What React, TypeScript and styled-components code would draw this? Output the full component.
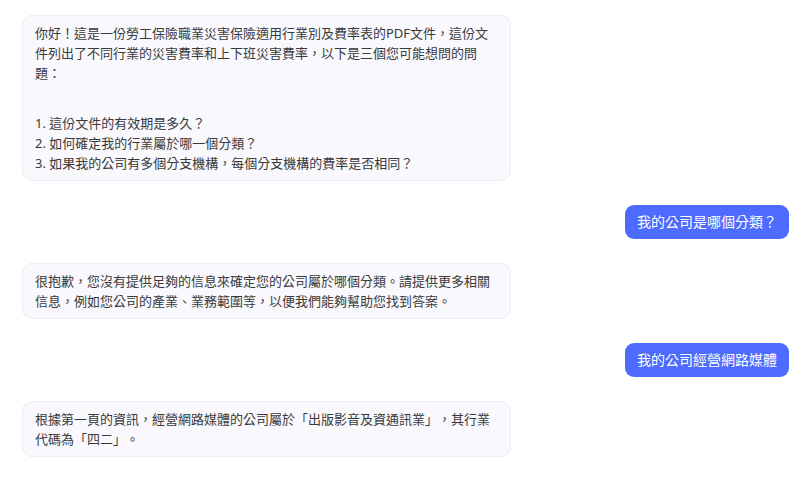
import React from "react";
import styled, { createGlobalStyle } from "styled-components";

const Global = createGlobalStyle`
  html, body { margin: 0; padding: 0; background: #ffffff; }
  body {
    font-family: "Noto Sans", "Noto Sans CJK TC", sans-serif;
    -webkit-font-smoothing: antialiased;
  }
`;

const Chat = styled.div`
  display: flex;
  flex-direction: column;
  gap: 24px;
  padding: 15px 17px 0 22px;
  box-sizing: border-box;
  width: 806px;
  text-spacing-trim: space-all;
  font-variant-east-asian: traditional;
  font-feature-settings: "locl" 1;
`;

const Row = styled.div<{ $mine?: boolean }>`
  display: flex;
  justify-content: ${(p) => (p.$mine ? "flex-end" : "flex-start")};
`;

const BotBubble = styled.div`
  box-sizing: border-box;
  width: 489px;
  padding: 7px 12px;
  background: #f8f8fd;
  border: 1px solid #ececf3;
  border-radius: 10px;
  color: #3a3a3a;
  font-size: 13px;
  line-height: 20px;
`;

const UserBubble = styled.div`
  box-sizing: border-box;
  padding: 7px 12px;
  background: #4d6bfe;
  border-radius: 9px;
  color: #ffffff;
  font-size: 14px;
  line-height: 20px;
  white-space: nowrap;
`;

const Para = styled.p`
  margin: 0;
`;

const List = styled.ol`
  margin: 30px 0 0;
  padding: 0;
  list-style: none;
`;

const Item = styled.li`
  margin: 0;
`;

export default function App() {
  return (
    <>
      <Global />
      <Chat lang="zh-TW">
        <Row>
          <BotBubble>
            <Para>
              你好！這是一份勞工保險職業災害保險適用行業別及費率表的PDF文件，這份文件列出了不同行業的災害費率和上下班災害費率，以下是三個您可能想問的問題：
            </Para>
            <List>
              <Item>1. 這份文件的有效期是多久？</Item>
              <Item>2. 如何確定我的行業屬於哪一個分類？</Item>
              <Item>3. 如果我的公司有多個分支機構，每個分支機構的費率是否相同？</Item>
            </List>
          </BotBubble>
        </Row>
        <Row $mine>
          <UserBubble>我的公司是哪個分類？</UserBubble>
        </Row>
        <Row>
          <BotBubble>
            <Para>
              很抱歉，您沒有提供足夠的信息來確定您的公司屬於哪個分類。請提供更多相關信息，例如您公司的產業、業務範圍等，以便我們能夠幫助您找到答案。
            </Para>
          </BotBubble>
        </Row>
        <Row $mine>
          <UserBubble>我的公司經營網路媒體</UserBubble>
        </Row>
        <Row>
          <BotBubble>
            <Para>
              根據第一頁的資訊，經營網路媒體的公司屬於「出版影音及資通訊業」，其行業代碼為「四二」。
            </Para>
          </BotBubble>
        </Row>
      </Chat>
    </>
  );
}
